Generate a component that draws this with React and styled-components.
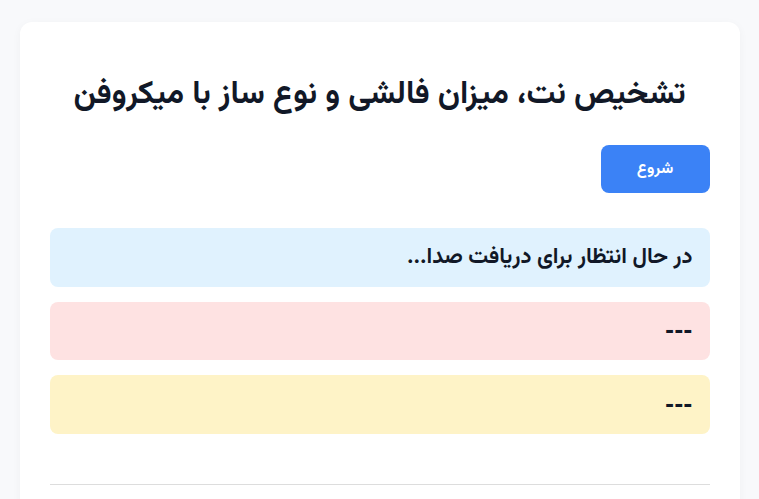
import React from "react";
import styled, { createGlobalStyle } from "styled-components";

const GlobalStyle = createGlobalStyle`
  html, body {
    margin: 0;
    padding: 0;
    background: #f8f9fb;
    font-family: "Vazirmatn", sans-serif;
    direction: rtl;
  }
`;

const Card = styled.div`
  max-width: 660px;
  margin: 22px auto;
  background: #ffffff;
  border-radius: 12px;
  padding: 30px;
  box-shadow: 0 2px 10px rgba(0, 0, 0, 0.04);
`;

const Title = styled.h1`
  margin: 18px 0 25px;
  text-align: center;
  font-size: 32px;
  font-weight: bold;
  color: #111827;
`;

const Controls = styled.div`
  display: flex;
  justify-content: flex-start;
  margin-bottom: 35px;
`;

const StartButton = styled.button`
  height: 48px;
  width: 109px;
  border: none;
  border-radius: 8px;
  background: #3b82f6;
  color: #ffffff;
  font-family: inherit;
  font-size: 16px;
  font-weight: bold;
  cursor: pointer;
`;

const Box = styled.div`
  display: flex;
  align-items: center;
  height: 58.5px;
  box-sizing: border-box;
  padding: 0 17px;
  margin-bottom: 15px;
  border-radius: 8px;
  background: ${(p) => p.$bg};
  color: #111827;
  font-size: 22px;
  font-weight: bold;
`;

// empty result placeholder
const Placeholder = styled.span`
  font-family: "DejaVu Sans", sans-serif;
  font-weight: bold;
`;

const Divider = styled.hr`
  margin: 50px 0 0;
  border: none;
  border-top: 1px solid #dddddd;
`;

export default function App() {
  return (
    <>
      <GlobalStyle />
      <Card>
        <Title>تشخیص نت، میزان فالشی و نوع ساز با میکروفن</Title>
        <Controls>
          <StartButton>شروع</StartButton>
        </Controls>
        <Box $bg="#e0f2fe">در حال انتظار برای دریافت صدا...</Box>
        <Box $bg="#fee2e2">
          <Placeholder>---</Placeholder>
        </Box>
        <Box $bg="#fef3c7">
          <Placeholder>---</Placeholder>
        </Box>
        <Divider />
      </Card>
    </>
  );
}
